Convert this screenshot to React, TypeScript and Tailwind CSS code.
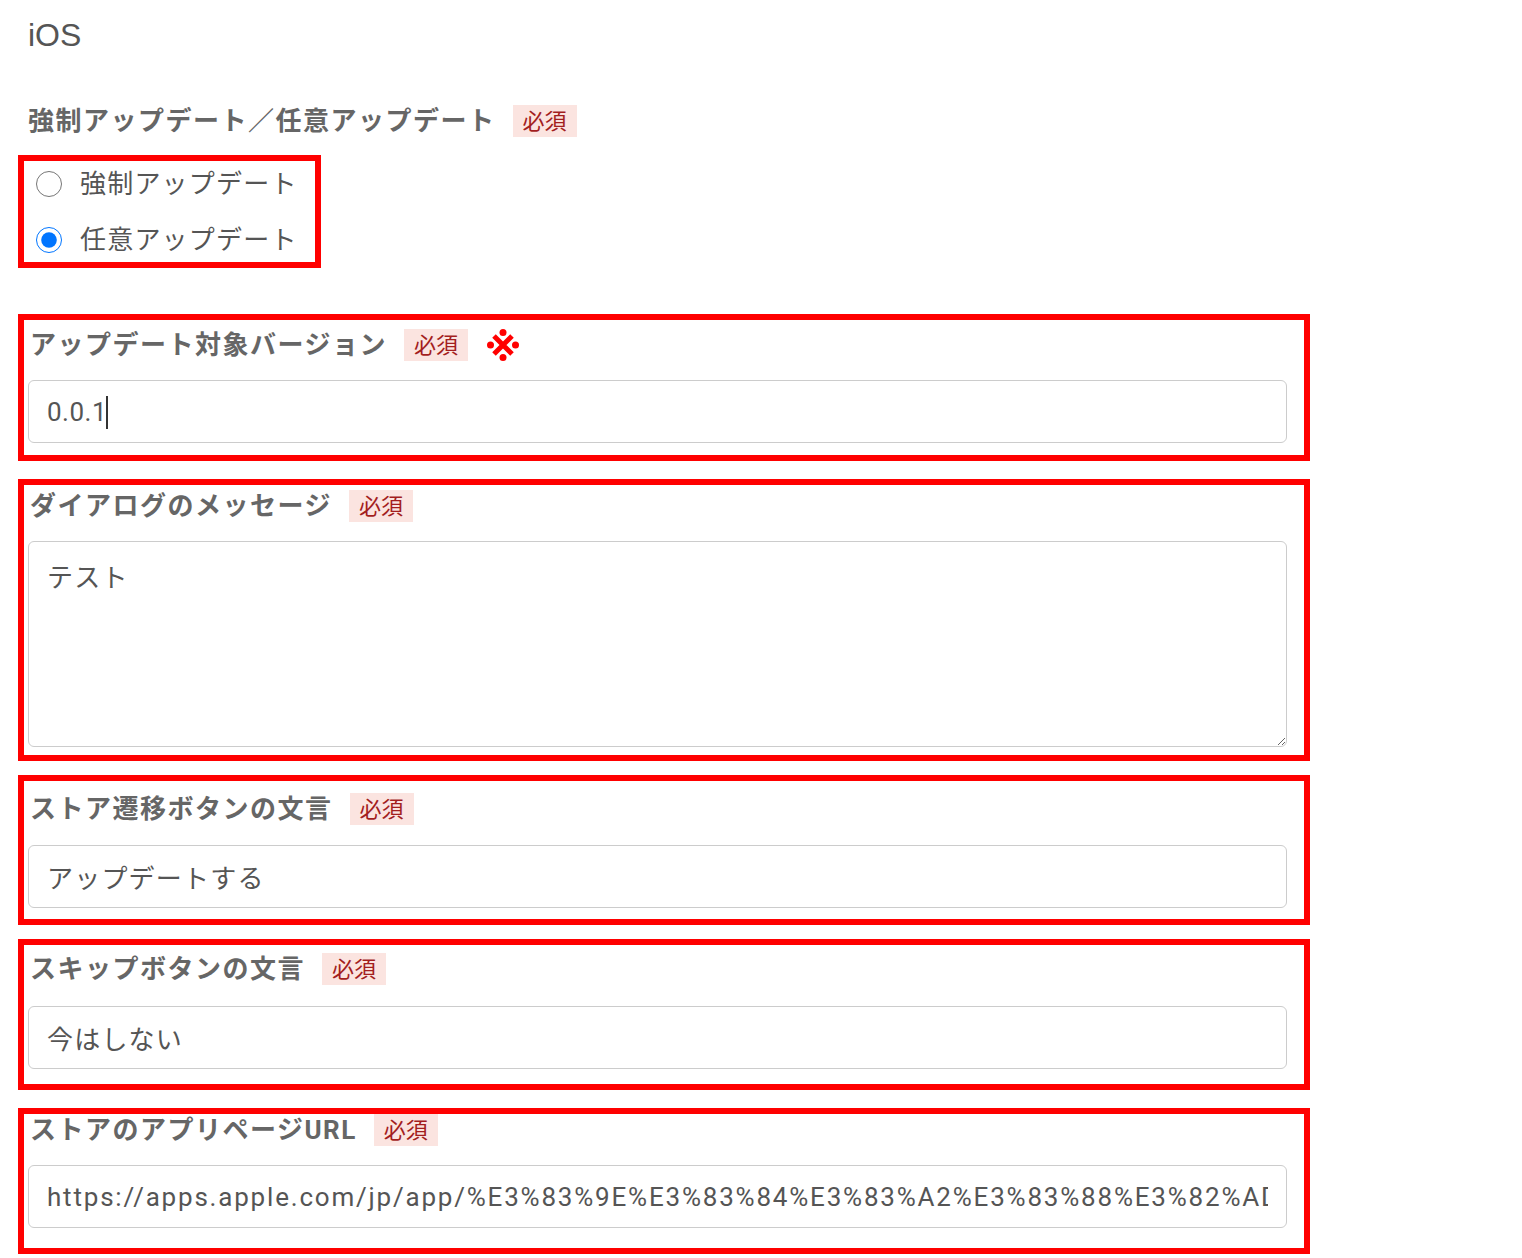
import React from 'react'

const URL_VALUE =
  'https://apps.apple.com/jp/app/%E3%83%9E%E3%83%84%E3%83%A2%E3%83%88%E3%82%AD%E3%83%A8%E3%82%B7/id1234567890'

function Required() {
  return (
    <span className="ml-[17px] inline-flex h-[32px] items-center bg-[#fbe4e0] px-[10px] text-[22px] font-normal tracking-normal text-[#a31e1e]">
      必須
    </span>
  )
}

function NoteMark() {
  return (
    <svg className="ml-[19px]" width="32" height="32" viewBox="0 0 32 32" fill="#ff0000">
      <path d="M7 7L25 25M25 7L7 25" stroke="#ff0000" strokeWidth="5" />
      <circle cx="16" cy="3.5" r="3.5" />
      <circle cx="3.5" cy="16" r="3.5" />
      <circle cx="28.5" cy="16" r="3.5" />
      <circle cx="16" cy="28.5" r="3.5" />
    </svg>
  )
}

function Label({ text, mark }: { text: string; mark?: boolean }) {
  return (
    <div className="flex h-[32px] items-center pl-[2px] text-[26px] font-bold tracking-[1.5px] text-[#666]">
      <span>{text}</span>
      <Required />
      {mark && <NoteMark />}
    </div>
  )
}

const inputCls =
  'block h-[63px] w-[1259px] rounded-[6px] border border-[#cccccc] bg-white px-[18px] text-[26px] text-[#555] outline-none'

// Why: the red frames are review annotations, so each one wraps a whole field
// and sits 10px left of the form column.
function Frame({ className, children }: { className: string; children: React.ReactNode }) {
  return <div className={'w-[1292px] border-[6px] border-[#ff0000] pl-[4px] ' + className}>{children}</div>
}

export default function App() {
  return (
    <div className="min-h-[1258px] bg-white pl-[18px] font-[Roboto,'Noto_Sans_CJK_JP',sans-serif] text-[#555]">
      <div className="flex h-[70px] items-center pl-[10px] font-['Liberation_Sans',sans-serif] text-[32px] text-[#555]">
        iOS
      </div>

      <div className="mt-[35px] pl-[8px]">
        <Label text="強制アップデート／任意アップデート" />
      </div>

      <div className="mt-[18px] w-[303px] border-[6px] border-[#ff0000] pt-px pl-[12px]">
        <label className="flex h-[44px] items-center">
          <input type="radio" name="mode" className="m-0 h-[26px] w-[26px]" />
          <span className="ml-[18px] text-[26px] tracking-[1.2px] text-[#555]">強制アップデート</span>
        </label>
        <label className="mt-[12px] flex h-[44px] items-center">
          <input type="radio" name="mode" defaultChecked className="m-0 h-[26px] w-[26px]" />
          <span className="ml-[18px] text-[26px] tracking-[1.2px] text-[#555]">任意アップデート</span>
        </label>
      </div>

      <Frame className="mt-[46px] pt-[9px] pb-[12px]">
        <Label text="アップデート対象バージョン" mark />
        <div className="relative mt-[19px]">
          <input className={inputCls + ' tracking-[0.5px]'} defaultValue="0.0.1" readOnly />
          <span className="absolute top-[16px] left-[78px] h-[33px] w-[2px] bg-[#333]" />
        </div>
      </Frame>

      <Frame className="mt-[18px] pt-[5px] pb-[8px]">
        <Label text="ダイアログのメッセージ" />
        <textarea
          className="mt-[19px] block h-[206px] w-[1259px] rounded-[6px] border border-[#cccccc] bg-white px-[18px] pt-[20px] text-[26px] leading-[32px] tracking-[1.2px] text-[#555] outline-none"
          defaultValue="テスト"
          readOnly
        />
      </Frame>

      <Frame className="mt-[14px] pt-[12px] pb-[11px]">
        <Label text="ストア遷移ボタンの文言" />
        <input className={'mt-[20px] tracking-[1.2px] ' + inputCls} defaultValue="アップデートする" readOnly />
      </Frame>

      <Frame className="mt-[14px] pt-[8px] pb-[15px]">
        <Label text="スキップボタンの文言" />
        <input className={'mt-[21px] tracking-[1.2px] ' + inputCls} defaultValue="今はしない" readOnly />
      </Frame>

      <Frame className="mt-[18px] pt-0 pb-[20px]">
        <Label text="ストアのアプリページURL" />
        <input className={'mt-[19px] tracking-[1.8px] ' + inputCls} defaultValue={URL_VALUE} readOnly />
      </Frame>
    </div>
  )
}
